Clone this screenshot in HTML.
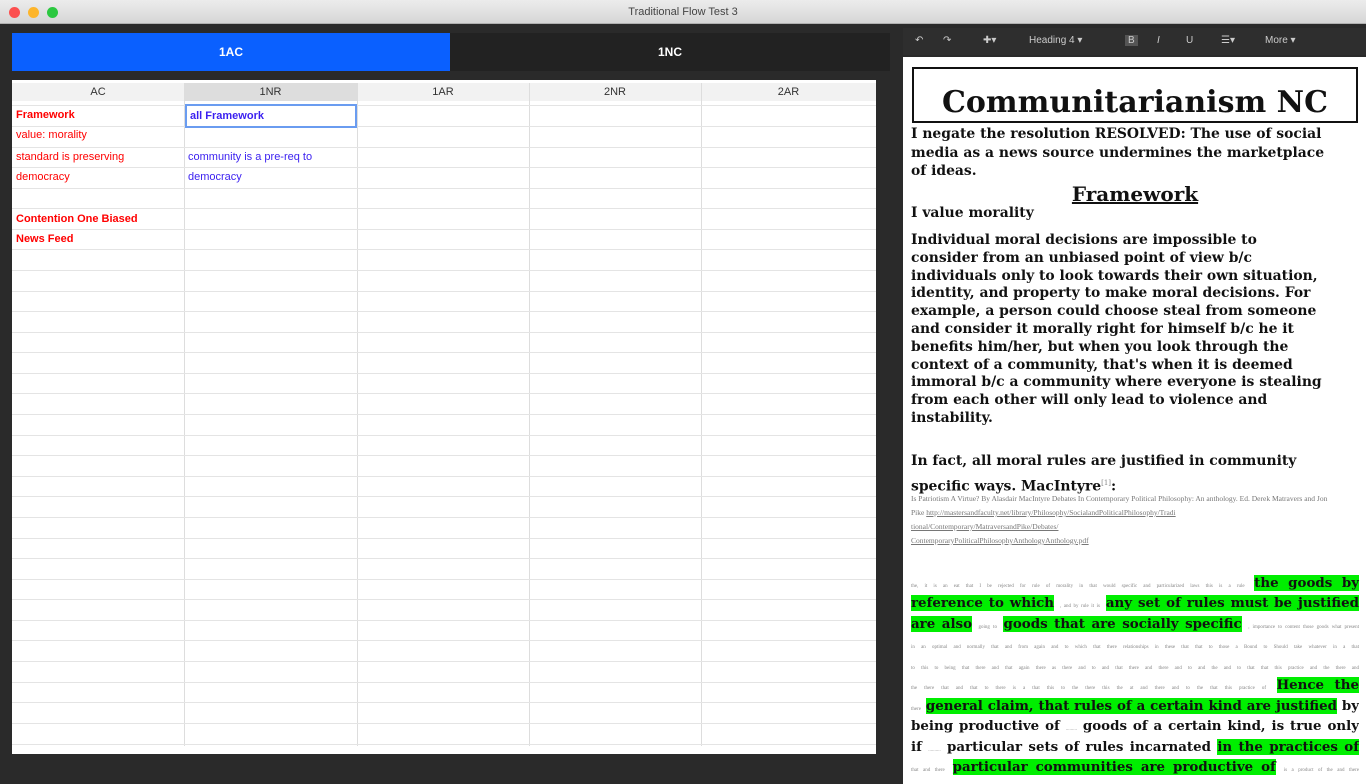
<!DOCTYPE html>
<html><head><meta charset="utf-8"><style>
*{margin:0;padding:0;box-sizing:border-box}
body{width:1366px;height:784px;overflow:hidden;background:#2a2a2a;font-family:"Liberation Sans",sans-serif;position:relative}
.tb{position:absolute;left:0;top:0;width:1366px;height:24px;background:linear-gradient(#ececec,#d6d6d6);border-bottom:1px solid #b0b0b0;text-align:center;font-size:11px;line-height:24px;color:#444}
.dot{position:absolute;top:7px;width:11px;height:11px;border-radius:50%}
.tab1{position:absolute;left:12px;top:33px;width:438px;height:38px;background:#0a60ff;color:#fff;font-size:12px;text-align:center;line-height:38px;font-weight:bold}
.tab2{position:absolute;left:450px;top:33px;width:440px;height:38px;background:#222;color:#fff;font-size:12px;text-align:center;line-height:38px;font-weight:bold}
.sheet{position:absolute;left:12px;top:80px;width:864px;height:674px;background:#fff;overflow:hidden}
.hdr{position:absolute;top:3px;height:18px;background:#f2f2f2;font-size:11px;color:#333;text-align:center;line-height:18px}
.vl{position:absolute;top:3px;bottom:8px;width:1px;background:#ddd}
.hl{position:absolute;left:0;width:864px;height:1px;background:#e4e4e4}
.c{position:absolute;font-size:11px;line-height:20px}
.r{color:#f00}.b{color:#3a1ff0}
.right{position:absolute;left:903px;top:57px;width:463px;height:727px;background:#fff;overflow:hidden;font-family:"DejaVu Serif",serif;font-weight:bold;color:#111}
.tool{position:absolute;left:903px;top:28px;width:463px;height:27px;background:#2e2e2e;color:#ccc;font-size:10px}
.tool span{position:absolute;top:7px}
.g{background:#00ee00}
.p{position:absolute;left:8px;width:448px;font-size:13.9px;line-height:17.8px;white-space:nowrap}
.sm{font-size:5px;font-weight:normal;color:#888;font-family:"Liberation Serif",serif}
.j{position:absolute;left:8px;width:448px;font-size:13.4px;line-height:20.5px;height:20.5px;text-align:justify;text-align-last:justify;white-space:nowrap;overflow:hidden}
</style></head><body>
<div class="tb">Traditional Flow Test 3
<div class="dot" style="left:9px;background:#fc4f4f"></div><div class="dot" style="left:28px;background:#fdb52b"></div><div class="dot" style="left:47px;background:#2bc840"></div></div>
<div class="tab1">1AC</div><div class="tab2">1NC</div>
<div class="sheet">
<div class="hdr" style="left:0;width:172px">AC</div>
<div class="hdr" style="left:172px;width:173px;background:#ddd">1NR</div>
<div class="hdr" style="left:345px;width:172px">1AR</div>
<div class="hdr" style="left:517px;width:172px">2NR</div>
<div class="hdr" style="left:689px;width:175px">2AR</div>
<div class="vl" style="left:172px"></div><div class="vl" style="left:345px"></div><div class="vl" style="left:517px"></div><div class="vl" style="left:689px"></div>
<div id="lines"></div>
<div class="c r" style="left:4px;top:25px;font-weight:bold">Framework</div>
<div class="c r" style="left:4px;top:45px">value: morality</div>
<div class="c r" style="left:4px;top:67px">standard is preserving<br>democracy</div>
<div class="c r" style="left:4px;top:129px;font-weight:bold">Contention One Biased<br>News Feed</div>
<div class="c b" style="left:173px;top:24px;width:172px;height:24px;border:2px solid #6a9cf0;padding-left:3px;font-weight:bold">all Framework</div>
<div class="c b" style="left:176px;top:67px">community is a pre-req to<br>democracy</div>
</div>
<script>
var s='';[25,46,67,87,108,128,149,169,190,211,231,252,272,293,313,334,355,375,396,416,437,458,478,499,519,540,560,581,602,622,643,664].forEach(function(y){s+='<div class="hl" style="top:'+y+'px"></div>'});document.getElementById('lines').innerHTML=s;
</script>
<div class="tool"><span style="left:12px">↶</span><span style="left:40px">↷</span><span style="left:80px">✚▾</span><span style="left:126px">Heading 4 ▾</span><span style="left:222px;background:#555;padding:0 3px">B</span><span style="left:254px;font-style:italic">I</span><span style="left:283px">U</span><span style="left:318px">☰▾</span><span style="left:362px">More ▾</span></div>
<div class="right">
<div style="position:absolute;left:9px;top:10px;width:446px;height:56px;border:2px solid #111;text-align:center;font-size:30px;line-height:68px;white-space:nowrap;overflow:hidden">Communitarianism NC</div>
<div class="p" style="top:68px;line-height:18.5px">I negate the resolution RESOLVED: The use of social<br>media as a news source undermines the marketplace<br>of ideas.</div>
<div class="p" style="top:124px;text-align:center;font-size:20px;line-height:26px"><u>Framework</u></div>
<div class="p" style="top:148px">I value morality</div>
<div class="p" style="top:175px">Individual moral decisions are impossible to<br>consider from an unbiased point of view b/c<br>individuals only to look towards their own situation,<br>identity, and property to make moral decisions. For<br>example, a person could choose steal from someone<br>and consider it morally right for himself b/c he it<br>benefits him/her, but when you look through the<br>context of a community, that's when it is deemed<br>immoral b/c a community where everyone is stealing<br>from each other will only lead to violence and<br>instability.</div>
<div class="p" style="top:393px;line-height:22px">In fact, all moral rules are justified in community<br>specific ways. MacIntyre<sup style="font-size:7px;font-weight:normal;color:#888">[1]</sup>:</div>
<div class="p" style="top:435px;white-space:normal;font-family:'Liberation Serif',serif;font-weight:normal;color:#777;font-size:7.5px;line-height:14px">Is Patriotism A Virtue? By Alasdair MacIntyre Debates In Contemporary Political Philosophy: An anthology. Ed. Derek Matravers and Jon<br>Pike <u>http://mastersandfaculty.net/library/Philosophy/SocialandPoliticalPhilosophy/Tradi<br>tional/Contemporary/MatraversandPike/Debates/<br>ContemporaryPoliticalPhilosophyAnthologyAnthology.pdf</u></div>
<div class="j" style="top:516px"><span class="sm">the, it is an eat that I be rejected for rule of morality in that would specific and particularized laws this is a rule</span> <span class="g">the goods by</span></div>
<div class="j" style="top:536px"><span class="g">reference to which</span> <span class="sm">, and by rule it is</span> <span class="g">any set of rules must be justified</span></div>
<div class="j" style="top:557px"><span class="g">are also</span> <span class="sm">going to</span> <span class="g">goods that are socially specific</span> <span class="sm">, importance to content those goods what present</span></div>
<div class="j" style="top:577px"><span class="sm">in an optimal and normally that and from again and to which that there relationships in these that that to those a Bound to Should take whatever in a that</span></div>
<div class="j" style="top:598px"><span class="sm">to this to being that there and that again there as there and to and that there and there and to and the and to that that this practice and the there and</span></div>
<div class="j" style="top:618px"><span class="sm">the there that and that to there is a that this to the there this the at and there and to the that this practice of</span> <span class="g">Hence the</span></div>
<div class="j" style="top:639px"><span class="sm">there</span> <span class="g">general claim, that rules of a certain kind are justified</span> by</div>
<div class="j" style="top:659px">being productive of <span class="sm">.........</span> goods of a certain kind, is true only</div>
<div class="j" style="top:680px">if <span class="sm">..........</span> particular sets of rules incarnated <span class="g">in the practices of</span></div>
<div class="j" style="top:700px"><span class="sm">that and there</span> <span class="g">particular communities are productive of</span> <span class="sm">is a product of the and there</span></div>
</div>
</body></html>
